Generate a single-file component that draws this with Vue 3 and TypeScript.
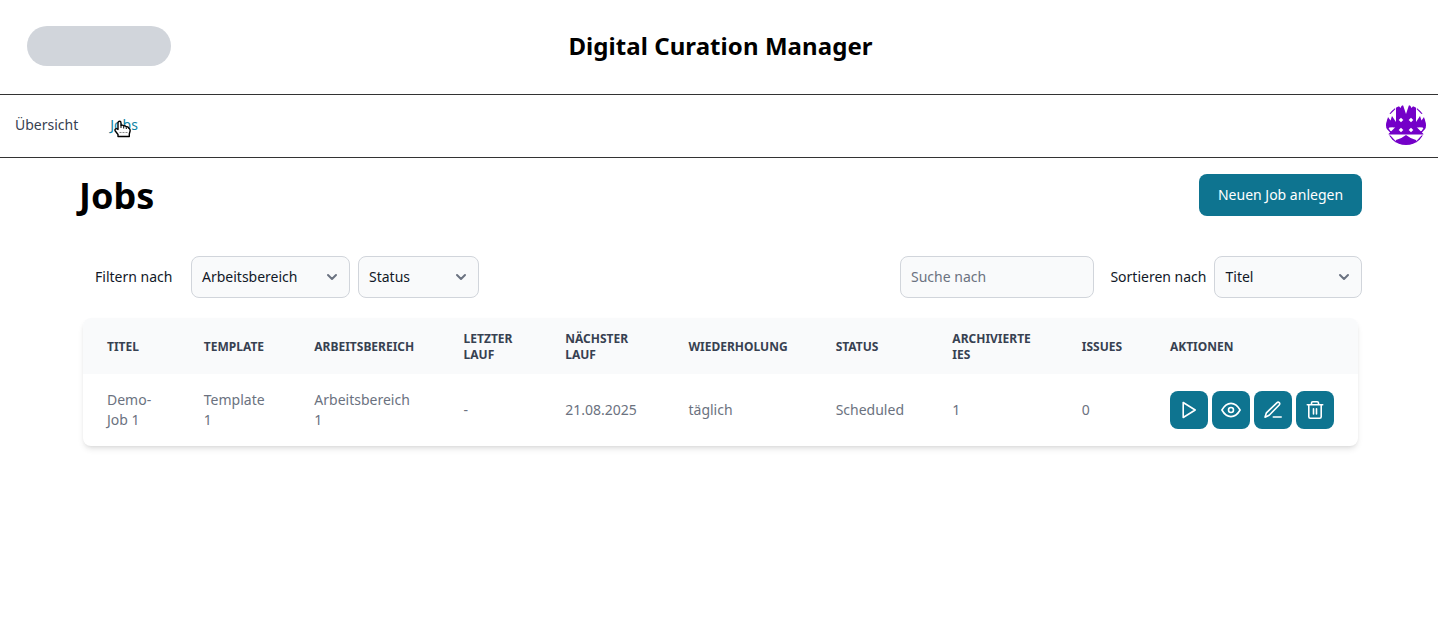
<script setup lang="ts">
interface Column {
  label: string
  width: number
}

const columns: Column[] = [
  { label: 'Titel', width: 96.8 },
  { label: 'Template', width: 110.5 },
  { label: 'Arbeitsbereich', width: 149.3 },
  { label: 'Letzter\nLauf', width: 101.7 },
  { label: 'Nächster\nLauf', width: 123.2 },
  { label: 'Wiederholung', width: 147.2 },
  { label: 'Status', width: 116.7 },
  { label: 'Archivierte\nIEs', width: 129.4 },
  { label: 'Issues', width: 88.2 },
  { label: 'Aktionen', width: 212 },
]

const cells: string[] = [
  'Demo-\nJob 1',
  'Template\n1',
  'Arbeitsbereich\n1',
  '-',
  '21.08.2025',
  'täglich',
  'Scheduled',
  '1',
  '0',
]

const diamonds: [number, number][] = [[15, 15], [25, 15], [15, 25], [25, 25]]
</script>

<template>
  <div class="page">
    <header class="top">
      <div class="logo"></div>
      <div class="brand">Digital Curation Manager</div>
    </header>

    <nav class="nav">
      <div class="links">
        <a class="link">Übersicht</a>
        <a class="link active">Jobs
          <svg class="cursor" width="18" height="19" viewBox="0 0 18 19">
            <path d="M4 9.500V3c0-2.300 3-2.300 3 0v2.500c1-.7 2.200-.4 2.600.6 1-.6 2.200-.2 2.600.8 1-.4 2.100 0 2.300 1l1 .8q.8.8.6 2.300l-.8 3v2.500H4v-2L1.300 11C.300 9.500 2 8 3.200 9z" fill="#fff" stroke="#000" stroke-width="1.4" stroke-linejoin="round" />
            <path d="M7 5.500v2.500M9.700 6.500v2M12.300 7.500v1.500" stroke="#000" />
            <path d="M5.500 12.500h8" stroke="#888" stroke-dasharray="2 1" />
          </svg>
        </a>
      </div>
      <svg class="avatar" width="40" height="40" viewBox="0 0 40 40">
        <defs>
          <clipPath id="round"><circle cx="20" cy="20" r="20" /></clipPath>
          <g id="half">
            <path d="M10 20V2l2-2 2.500 3L16 0h1l3 9V29.500H2l7-7z" />
            <path d="M0 20.500V18l2-6 2.500 3.500L6 11l4 6v5.500H2z" />
            <path d="M3 8.500 8.500 3l1 1L4.500 9z" />
            <path d="M0 20h2.500L4 25l2.500 3-1 1L0 23z" />
            <path d="M2.500 23 7.500 22.500 4.500 26z" fill="#fff" />
            <path d="M3 30.500h1.500L10 36.500l-1 2z" />
            <path d="M20 30v10H8l2-5q5-1 10-5z" />
          </g>
        </defs>
        <g clip-path="url(#round)" fill="#7400c8">
          <use href="#half" />
          <use href="#half" transform="matrix(-1 0 0 1 40 0)" />
          <path v-for="[x, y] in diamonds" :key="`${x}-${y}`" :d="`M${x - 2.3} ${y}l2.300-2.300 2.300 2.300-2.300 2.300z`" fill="#fff" />
        </g>
      </svg>
    </nav>

    <main class="content">
      <div class="heading">
        <h1>Jobs</h1>
        <button class="primary">Neuen Job anlegen</button>
      </div>

      <div class="filters">
        <span class="filter-label">Filtern nach</span>
        <div class="select workspace">Arbeitsbereich
          <svg width="10" height="6" viewBox="0 0 10 6"><path d="m1 1 4 4 4-4" /></svg>
        </div>
        <div class="select status">Status
          <svg width="10" height="6" viewBox="0 0 10 6"><path d="m1 1 4 4 4-4" /></svg>
        </div>
        <input class="search" placeholder="Suche nach" />
        <span class="sort-label">Sortieren nach</span>
        <div class="select sort">Titel
          <svg width="10" height="6" viewBox="0 0 10 6"><path d="m1 1 4 4 4-4" /></svg>
        </div>
      </div>

      <div class="card">
        <table>
          <colgroup>
            <col v-for="column in columns" :key="column.label" :style="{ width: column.width + 'px' }" />
          </colgroup>
          <thead>
            <tr><th v-for="column in columns" :key="column.label">{{ column.label }}</th></tr>
          </thead>
          <tbody>
            <tr>
              <td v-for="(cell, i) in cells" :key="i">{{ cell }}</td>
              <td>
                <div class="actions">
                  <button class="action" aria-label="Starten">
                    <svg viewBox="0 0 20 20"><path d="M4.200 2.500v15L16.200 10z" /></svg>
                  </button>
                  <button class="action" aria-label="Anzeigen">
                    <svg viewBox="0 0 20 20"><path d="M.900 10C3.200 6 6.200 3.400 10 3.400s6.800 2.600 9.100 6.600c-2.300 4-5.300 6.600-9.100 6.600S3.200 14 .900 10z" /><circle cx="10" cy="10" r="2.500" /></svg>
                  </button>
                  <button class="action" aria-label="Bearbeiten">
                    <svg viewBox="0 0 20 20"><path d="m2 17.200 1.400-4.400 10.400-10c1.700-1.500 3.900.4 2.400 2.200L6.200 15.200zM10.300 17h7.900" /></svg>
                  </button>
                  <button class="action" aria-label="Löschen">
                    <svg viewBox="0 0 20 20"><path d="M2.300 4.700h15.400M3.800 4.700v12q0 1.600 1.600 1.600h9.200q1.600 0 1.600-1.600v-12M6.500 4.700V3q0-1.300 1.300-1.300h4.400q1.300 0 1.300 1.300v1.700M8.500 8.700v5.300M11.500 8.700v5.300" /></svg>
                  </button>
                </div>
              </td>
            </tr>
          </tbody>
        </table>
      </div>
    </main>
  </div>
</template>

<style>
body {
  margin: 0;
  background: #fff;
}
</style>

<style scoped>
* {
  box-sizing: border-box;
}
.page {
  width: 1438px;
  height: 617px;
  overflow: hidden;
  font: 14px/20px "Noto Sans", sans-serif;
  color: #111827;
}
.top {
  display: grid;
  grid-template-columns: 144px 1fr 144px;
  align-items: center;
  height: 95px;
  padding: 0 24px 2px 27px;
  border-bottom: 1px solid #333;
}
.logo {
  height: 40px;
  border-radius: 20px;
  background: #d1d5db;
}
.brand {
  text-align: center;
  font-size: 24px;
  line-height: 32px;
  font-weight: 700;
  letter-spacing: 0.07px;
  color: #000;
}
.nav {
  display: flex;
  justify-content: space-between;
  align-items: center;
  height: 63px;
  padding: 0 12px 2px 15px;
  border-bottom: 1px solid #333;
}
.links {
  display: flex;
  gap: 32px;
}
.link {
  position: relative;
  color: #374151;
}
.active {
  color: #0e82a4;
}
.cursor {
  position: absolute;
  left: 4px;
  top: 5px;
  fill: none;
}
.avatar {
  display: block;
}
.content {
  padding: 16px 76px 0 79px;
}
.heading {
  display: flex;
  justify-content: space-between;
  align-items: center;
  height: 42px;
}
h1 {
  margin: 0;
  padding-top: 2px;
  font-size: 36px;
  line-height: 40px;
  font-weight: 700;
  color: #000;
}
button {
  border: 0;
  background: #0e7490;
  color: #fff;
  font: inherit;
  border-radius: 8px;
}
.primary {
  width: 163px;
  height: 42px;
  padding: 0;
}
.filters {
  display: flex;
  align-items: center;
  margin-top: 40px;
  height: 42px;
}
.filter-label {
  width: 96px;
  margin-left: 16px;
}
.select {
  display: flex;
  align-items: center;
  justify-content: space-between;
  height: 42px;
  padding: 0 12px 0 10px;
  border: 1px solid #d1d5db;
  border-radius: 8px;
  background: #f9fafb;
}
.select svg {
  fill: none;
  stroke: #6b7280;
  stroke-width: 2;
  stroke-linecap: round;
  stroke-linejoin: round;
  overflow: visible;
}
.workspace {
  width: 159px;
}
.status {
  width: 121px;
  margin-left: 8px;
}
.sort {
  width: 148px;
  padding-left: 10.5px;
}
.search {
  width: 194px;
  height: 42px;
  margin-left: auto;
  padding: 0 10px 2px;
  border: 1px solid #d1d5db;
  border-radius: 8px;
  background: #f9fafb;
  font: inherit;
}
.search::placeholder {
  color: #6b7280;
  opacity: 1;
}
.sort-label {
  width: 103.6px;
  margin-left: 16.4px;
  white-space: nowrap;
}
.card {
  width: 1275px;
  margin: 20px 0 0 4px;
  overflow: hidden;
  border-radius: 8px;
  box-shadow: 0 4px 6px -1px rgb(0 0 0 / 0.1), 0 2px 4px -2px rgb(0 0 0 / 0.1);
}
table {
  width: 1275px;
  table-layout: fixed;
  border-collapse: collapse;
  text-align: left;
}
th {
  height: 56px;
  padding: 13px 0 11px 24px;
  background: #f9fafb;
  color: #374151;
  font-size: 12px;
  line-height: 16px;
  font-weight: 700;
  text-transform: uppercase;
  white-space: pre-line;
}
td {
  height: 72px;
  padding: 16px 0 16px 24px;
  color: #6b7280;
  white-space: pre-line;
}
.actions {
  display: flex;
  gap: 4px;
}
.action {
  display: grid;
  place-items: center;
  width: 38px;
  height: 38px;
  padding: 0;
}
.action svg {
  width: 20px;
  height: 20px;
  fill: none;
  stroke: #fff;
  stroke-width: 1.6;
  stroke-linecap: round;
  stroke-linejoin: round;
}
</style>
